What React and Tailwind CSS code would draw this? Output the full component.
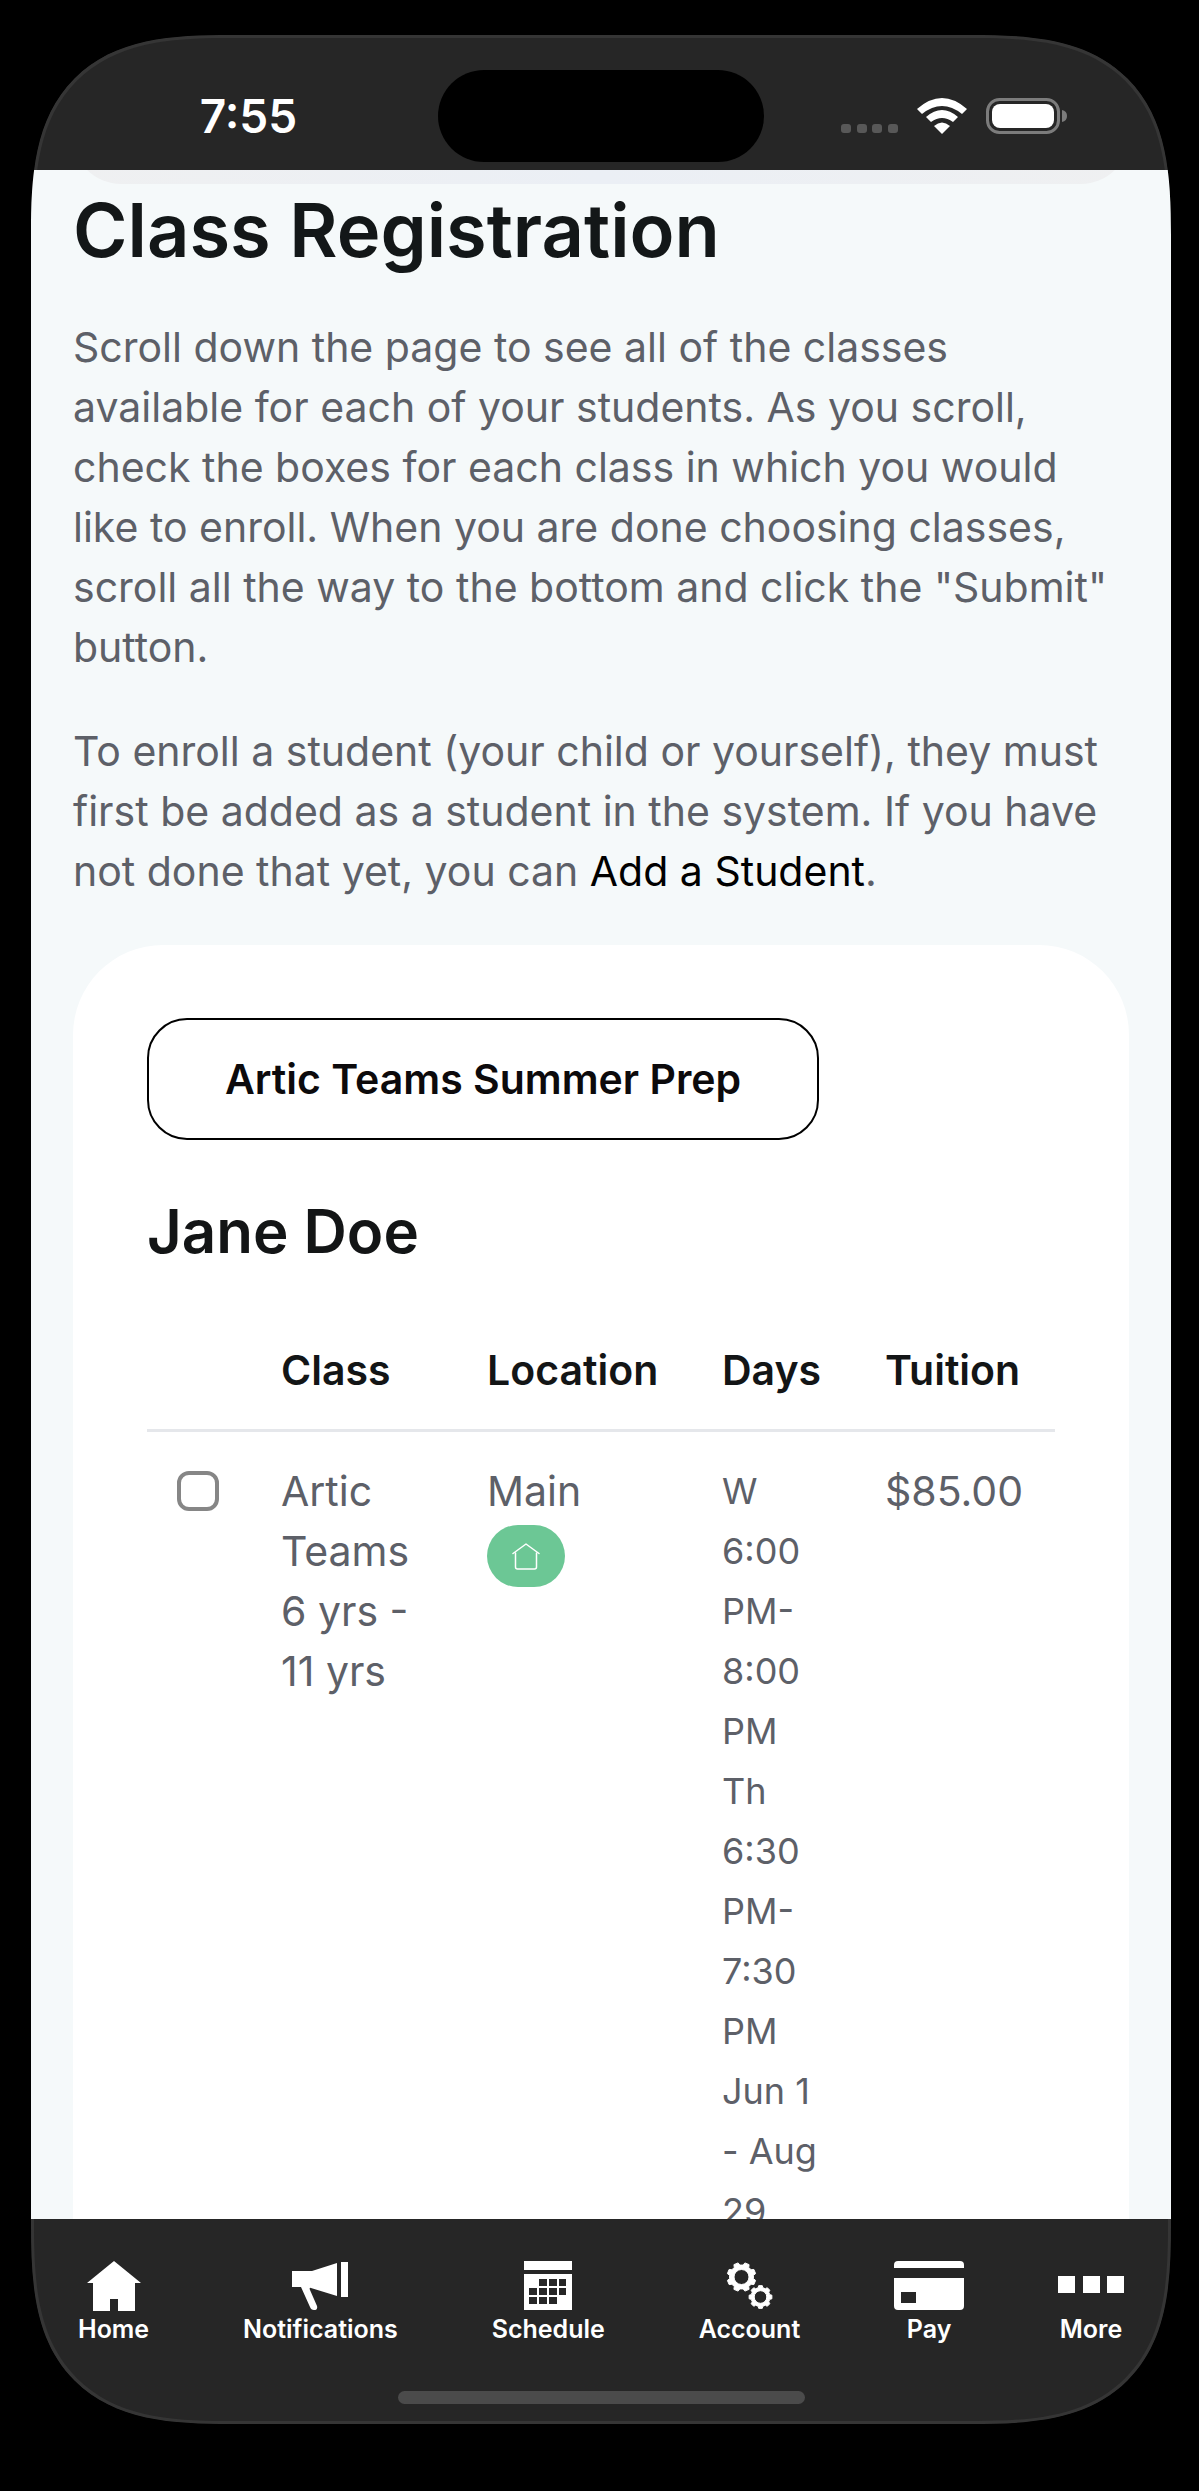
import React, { useState } from "react";

const Gear = ({ cx, cy, r, hole, teeth, turn }) => {
  const pts = [];
  const step = (Math.PI * 2) / teeth;
  for (let i = 0; i < teeth; i++) {
    const a = (i + turn) * step - Math.PI / 2;
    [
      [-0.32, 0.83],
      [-0.2, 1],
      [0.2, 1],
      [0.32, 0.83],
    ].forEach(([t, k]) => {
      const x = cx + Math.cos(a + t * step) * r * k;
      const y = cy + Math.sin(a + t * step) * r * k;
      pts.push(`${x.toFixed(2)} ${y.toFixed(2)}`);
    });
  }
  const ring = `M${cx - hole} ${cy}a${hole} ${hole} 0 1 0 ${hole * 2} 0a${hole} ${hole} 0 1 0 ${-hole * 2} 0z`;
  return (
    <path
      d={`M${pts.join("L")}Z${ring}`}
      fillRule="evenodd"
      stroke="currentColor"
      strokeWidth="1"
      strokeLinejoin="round"
    />
  );
};

const HomeIcon = () => (
  <svg width="54" height="50" viewBox="0 0 54 50" fill="currentColor">
    <path d="M27 0L54 22H48V50H31V38H23V50H6V22H0Z" />
  </svg>
);

const MegaphoneIcon = () => (
  <svg width="56" height="50" viewBox="0 0 56 50" fill="currentColor">
    <path d="M0 10H20L45 2V35L19 27Q17 26 18 29L25 45Q26 49 22 49Q19 49 18 46L9 26H0Z" />
    <path d="M49 1H56V36H49Z" />
  </svg>
);

const CalendarIcon = () => (
  <svg width="48" height="50" viewBox="0 0 48 50">
    <path d="M0 0H48V9H0ZM0 13H48V49H0Z" fill="currentColor" />
    <path
      d="M15 18h8v7h-8zM25 18h8v7h-8zM35 18h7v7h-7zM5 27h8v7h-8zM15 27h8v7h-8zM25 27h8v7h-8zM35 27h7v7h-7zM5 36h8v7h-8zM15 36h8v7h-8zM25 36h8v7h-8z"
      fill="#262626"
    />
  </svg>
);

const GearsIcon = () => (
  <svg width="47" height="50" viewBox="0 0 47 50" fill="currentColor">
    <Gear cx={15.5} cy={16} r={14.5} hole={7.5} teeth={8} turn={0.5} />
    <Gear cx={34.5} cy={36} r={11.5} hole={6.3} teeth={8} turn={0} />
  </svg>
);

const CardIcon = () => (
  <svg width="70" height="50" viewBox="0 0 70 50" fill="currentColor">
    <path d="M4 0H66Q70 0 70 4V7H0V4Q0 0 4 0Z" />
    <path
      d="M0 17H70V45Q70 49 66 49H4Q0 49 0 45ZM7 31V42H22V31Z"
      fillRule="evenodd"
    />
  </svg>
);

const MoreIcon = () => (
  <svg width="66" height="50" viewBox="0 0 66 50" fill="currentColor">
    <path d="M0 15H17V32H0ZM25 15H42V32H25ZM49 15H66V32H49Z" />
  </svg>
);

const navItems = [
  { name: "Home", icon: HomeIcon },
  { name: "Notifications", icon: MegaphoneIcon },
  { name: "Schedule", icon: CalendarIcon },
  { name: "Account", icon: GearsIcon },
  { name: "Pay", icon: CardIcon },
  { name: "More", icon: MoreIcon },
];

const StatusBar = () => {
  return (
    <header className="flex items-center shrink-0 pt-[35px] pb-2 text-white">
      <div className="flex-1 flex justify-center pl-7">
        <p className="text-[46px] leading-[60px] font-semibold">7:55</p>
      </div>
      <div className="w-[326px] h-[92px] rounded-full bg-black"></div>
      <div className="flex-1 flex items-center justify-center pr-7">
        <svg width="226" height="36" viewBox="0 0 226 36" fill="currentColor">
          <g fill="#585858">
            <rect x="0" y="26" width="10" height="9" rx="3" />
            <rect x="16" y="26" width="10" height="9" rx="3" />
            <rect x="31" y="26" width="10" height="9" rx="3" />
            <rect x="47" y="26" width="10" height="9" rx="3" />
          </g>
          <path d="M76 11Q101 -11 126 11L121 16Q101 0 81 16Z" />
          <path d="M85 19Q101 5 117 19L112 24Q101 16 90 24Z" />
          <path d="M93 28Q101 21 109 28L101 36Z" />
          <rect
            x="146.500"
            y="1.500"
            width="71"
            height="33"
            rx="12"
            fill="none"
            stroke="#7c7c7c"
            strokeWidth="3"
          />
          <rect x="151" y="6" width="62" height="24" rx="8" />
          <path d="M221 12Q226 13 226 18Q226 23 221 24Z" fill="#7c7c7c" />
        </svg>
      </div>
    </header>
  );
};

const ClassTable = () => {
  const [checked, setChecked] = useState(false);

  return (
    <table className="w-full mt-11 table-fixed text-left align-top">
      <colgroup>
        <col className="w-[104px]" />
        <col className="w-[206px]" />
        <col className="w-[235px]" />
        <col className="w-[163px]" />
        <col />
      </colgroup>
      <thead>
        <tr className="border-b-3 border-[#e5e7eb] text-[#131516]">
          <td className="px-[30px] py-[29px]"></td>
          <th className="px-[30px] py-[29px] font-semibold">Class</th>
          <th className="px-[30px] py-[29px] font-semibold">Location</th>
          <th className="px-[30px] py-[29px] font-semibold">Days</th>
          <th className="px-[30px] py-[29px] font-semibold">Tuition</th>
        </tr>
      </thead>
      <tbody>
        <tr className="align-top">
          <td className="px-[30px] py-[29px]">
            <input
              type="checkbox"
              aria-label="Artic Teams 6 yrs - 11 yrs"
              checked={checked}
              onChange={() => setChecked(!checked)}
              className="block appearance-none mt-[10px] w-[42px] h-10 border-4 border-[#868686] rounded-xl bg-white checked:bg-[#868686]"
            />
          </td>
          <td className="px-[30px] py-[29px]">Artic Teams 6 yrs - 11 yrs</td>
          <td className="px-[30px] py-[29px]">
            <p>Main</p>
            <span className="flex items-center justify-center mt-1 w-[78px] h-[62px] rounded-full bg-[#6cc795]">
              <svg
                width="28"
                height="28"
                viewBox="0 0 28 28"
                fill="none"
                stroke="white"
                strokeWidth="1.500"
                strokeLinecap="round"
                strokeLinejoin="round"
              >
                <path d="M1 11.500L14 2L27 11.500" />
                <path d="M3.500 11V25Q3.500 27 5.500 27H22.500Q24.500 27 24.500 25V11" />
              </svg>
            </span>
          </td>
          <td className="px-[30px] py-[29px] text-4xl leading-[60px]">
            <p>W 6:00 PM- 8:00 PM</p>
            <p>Th 6:30 PM- 7:30 PM</p>
            <p>Jun 1 - Aug 29</p>
          </td>
          <td className="px-[30px] py-[29px]">$85.00</td>
        </tr>
      </tbody>
    </table>
  );
};

const BottomNav = () => {
  return (
    <footer className="shrink-0 flex flex-col items-center pt-[42px] pb-5 text-white">
      <nav className="flex justify-between w-full px-[47px]">
        {navItems.map(({ name, icon: Icon }) => (
          <a key={name} href="#" className="flex flex-col items-center gap-[2px]">
            <Icon />
            <span className="text-[25px] leading-8 font-semibold">{name}</span>
          </a>
        ))}
      </nav>
      <div className="mt-[46px] w-[407px] h-[13px] rounded-full bg-[#4b4b4b]"></div>
    </footer>
  );
};

const App = () => {
  return (
    <div className="h-screen bg-black pt-[35px] pb-[67px] pl-[31px] pr-7 font-['Inter',sans-serif]">
      <div className="relative flex flex-col h-full overflow-hidden bg-[#262626] rounded-[150px] supports-[corner-shape:squircle]:rounded-[200px] [corner-shape:superellipse(1.5)]">
        <div className="absolute inset-0 pointer-events-none border-3 border-[#353535] rounded-[150px] supports-[corner-shape:squircle]:rounded-[200px] [corner-shape:superellipse(1.5)]"></div>
        <StatusBar />
        <main className="relative flex-1 min-h-0 overflow-hidden px-[42px] bg-[#f5f9fa] text-[41px] leading-[60px] text-[#5d6068]">
          <div className="-mt-[86px] h-[100px] rounded-b-[48px] bg-linear-to-r from-[#eff0f1] via-[#ebeff5] to-[#eff0f1]"></div>
          <h1 className="mt-[2px] text-[74px] leading-[88px] font-semibold text-[#131718]">
            Class Registration
          </h1>
          <p className="mt-[43px] pr-3">
            Scroll down the page to see all of the classes available for each of
            your students. As you scroll, check the boxes for each class in
            which you would like to enroll. When you are done choosing classes,
            scroll all the way to the bottom and click the "Submit" button.
          </p>
          <p className="mt-11 pr-3">
            To enroll a student (your child or yourself), they must first be
            added as a student in the system. If you have not done that yet, you
            can{" "}
            <a href="#" className="text-black">
              Add a Student
            </a>
            .
          </p>

          <section className="mt-11 px-[74px] py-[73px] rounded-t-[90px] bg-white">
            <button className="h-[122px] min-w-[672px] border-2 border-black rounded-[40px] font-semibold text-[#0c0a0c]">
              Artic Teams Summer Prep
            </button>
            <h2 className="mt-[55px] text-[60px] leading-[72px] font-semibold text-[#131516]">
              Jane Doe
            </h2>
            <ClassTable />
          </section>
        </main>
        <BottomNav />
      </div>
    </div>
  );
};

export default App;
